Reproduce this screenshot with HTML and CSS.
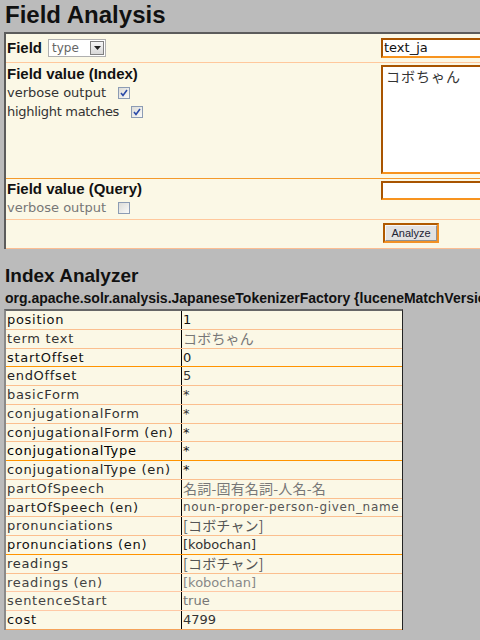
FILE: index.html
```html
<!DOCTYPE html>
<html>
<head>
<meta charset="utf-8">
<link rel="stylesheet" href="styles.css">
</head>
<body>
<h1 class="title">Field Analysis</h1>
<div class="panel">
  <div class="prow r1">
    <div class="lab">
      <span class="blab">Field</span>
      <span class="select"><span class="sel-text">type</span><span class="sel-btn"><svg width="7" height="4" viewBox="0 0 7 4"><path d="M0 0H7L3.5 4Z" fill="#222"/></svg></span></span>
    </div>
    <div class="ctl"><div class="tinput">text_ja</div></div>
  </div>
  <div class="prow r2">
    <div class="lab">
      <div class="blab">Field value (Index)</div>
      <div class="opt">verbose output <span class="cb"><svg width="10" height="10" viewBox="0 0 10 10"><path d="M2 5L4 7.5L8 2" fill="none" stroke="#2a4aa8" stroke-width="1.6"/></svg></span></div>
      <div class="opt hl">highlight matches <span class="cb"><svg width="10" height="10" viewBox="0 0 10 10"><path d="M2 5L4 7.5L8 2" fill="none" stroke="#2a4aa8" stroke-width="1.6"/></svg></span></div>
    </div>
    <div class="ctl"><div class="tarea">コボちゃん</div></div>
  </div>
  <div class="prow r3">
    <div class="lab">
      <div class="blab">Field value (Query)</div>
      <div class="opt dim">verbose output <span class="cb"></span></div>
    </div>
    <div class="ctl"><div class="tinput q"></div></div>
  </div>
  <div class="prow r4">
    <div class="lab"></div>
    <div class="ctl"><span class="btnwrap"><span class="btn">Analyze</span></span></div>
  </div>
</div>
<h2 class="sub">Index Analyzer</h2>
<h3 class="cls">org.apache.solr.analysis.JapaneseTokenizerFactory {luceneMatchVersion=LUCENE_40}</h3>
<div class="tbl">
  <div class="tr b1"><div class="k c1">position</div><div class="v c1">1</div></div>
  <div class="tr b1"><div class="k c3">term text</div><div class="v cj c7">コボちゃん</div></div>
  <div class="tr b2"><div class="k c1">startOffset</div><div class="v c2">0</div></div>
  <div class="tr b1"><div class="k c2">endOffset</div><div class="v c3">5</div></div>
  <div class="tr b1"><div class="k c3">basicForm</div><div class="v c3">*</div></div>
  <div class="tr b1"><div class="k c3">conjugationalForm</div><div class="v c3">*</div></div>
  <div class="tr b1"><div class="k c2">conjugationalForm (en)</div><div class="v c2">*</div></div>
  <div class="tr b2"><div class="k c0">conjugationalType</div><div class="v c1">*</div></div>
  <div class="tr b1"><div class="k c2">conjugationalType (en)</div><div class="v c1">*</div></div>
  <div class="tr b1"><div class="k c3">partOfSpeech</div><div class="v cj c7">名詞-固有名詞-人名-名</div></div>
  <div class="tr b1"><div class="k c2">partOfSpeech (en)</div><div class="v sm c5">noun-proper-person-given_name</div></div>
  <div class="tr b1"><div class="k c3">pronunciations</div><div class="v cj c5">[コボチャン]</div></div>
  <div class="tr b2"><div class="k c1">pronunciations (en)</div><div class="v c3">[kobochan]</div></div>
  <div class="tr b1"><div class="k c3">readings</div><div class="v cj c5">[コボチャン]</div></div>
  <div class="tr b3"><div class="k c4">readings (en)</div><div class="v c8">[kobochan]</div></div>
  <div class="tr b3"><div class="k c4">sentenceStart</div><div class="v c7">true</div></div>
  <div class="tr b4"><div class="k c1">cost</div><div class="v c3">4799</div></div>
</div>
</body>
</html>
```
FILE: styles.css
```css
html, body {
  margin: 0;
  padding: 0;
}
body {
  background: #bbbbbb;
  width: 480px;
  height: 640px;
  overflow: hidden;
  font-family: "DejaVu Sans", "Noto Sans CJK JP", sans-serif;
  color: #222;
}
.title {
  margin: 0;
  padding: 2px 0 0 5px;
  height: 28px;
  font: bold 24px/26px "Liberation Sans", Arial, sans-serif;
  color: #111;
}
.panel {
  margin: 2px 0 0 4px;
  width: 800px;
  border-top: 2px solid #5c5c5c;
  border-left: 2px solid #5c5c5c;
  background: #fbf8e6;
}
.prow {
  display: flex;
  border-bottom: 1px solid #ffc89c;
}
.r1 { height: 28px; }
.r2 { height: 115px; border-bottom-color: #f49a2c; }
.r3 { height: 40px; }
.r4 { height: 28px; border-bottom-color: #fbbd92; }
.lab {
  width: 374px;
  padding-left: 1px;
}
.ctl {
  flex: 1;
}
.blab {
  font: bold 15px/18px "Liberation Sans", Arial, sans-serif;
  color: #111;
}
.r1 .lab {
  display: flex;
  align-items: center;
  gap: 6px;
}
.r2 .blab { margin-top: 2px; }
.r3 .blab { margin-top: 1px; }
.select {
  display: inline-flex;
  align-items: center;
  height: 18px;
  width: 58px;
  box-sizing: border-box;
  background: #fff;
  border: 1px solid #b0b0b0;
  padding: 0 1px 0 3px;
}
.sel-text {
  flex: 1;
  font: 12px "DejaVu Sans", sans-serif;
  color: #666;
}
.sel-btn {
  width: 14px;
  height: 14px;
  box-sizing: border-box;
  border: 1px solid #808080;
  background: linear-gradient(#f6f6f6, #d8d8d8);
  display: flex;
  align-items: center;
  justify-content: center;
}
.tinput {
  margin-top: 4px;
  height: 20px;
  box-sizing: border-box;
  background: #fff;
  border: 2px solid #f7931e;
  border-top-color: #a85400;
  border-left-color: #a85400;
  font: 13px/16px "DejaVu Sans", sans-serif;
  color: #111;
  padding-left: 1px;
}
.tinput.q {
  margin-top: 2px;
  height: 19px;
}
.tarea {
  margin-top: 2px;
  height: 109px;
  box-sizing: border-box;
  background: #fff;
  border: 2px solid #f7931e;
  border-top-color: #a85400;
  border-left-color: #a85400;
  font: 14px/18px "Noto Sans CJK JP", sans-serif;
  color: #333;
  padding: 0 3px;
  letter-spacing: 1px;
}
.opt {
  display: flex;
  align-items: center;
  height: 19px;
  font-size: 13px;
  color: #333;
  white-space: pre;
}
.opt.hl { letter-spacing: -0.3px; }
.r2 .opt:first-of-type { margin-top: 2px; }
.opt.dim { color: #777; }
.cb {
  display: inline-flex;
  align-items: center;
  justify-content: center;
  width: 12px;
  height: 12px;
  box-sizing: border-box;
  margin-left: 8px;
  border: 1px solid #8c9cb4;
  background: linear-gradient(135deg, #dcdcd8, #fafaf8);
}
.btnwrap {
  display: inline-block;
  margin: 3px 0 0 2px;
  border: 2px solid #f29124;
  border-top-color: #b05a00;
  border-left-color: #b05a00;
}
.btn {
  display: block;
  width: 52px;
  height: 16px;
  box-sizing: border-box;
  background: #e2e2e2;
  border: 1px solid #f8f8f8;
  border-right-color: #909090;
  border-bottom-color: #909090;
  font: 11px/14px "Liberation Sans", Arial, sans-serif;
  text-align: center;
  color: #223;
}
.sub {
  margin: 16px 0 0 5px;
  font: bold 19px/22px "Liberation Sans", Arial, sans-serif;
  color: #111;
}
.cls {
  margin: 3px 0 0 5px;
  font: bold 14px/16px "Liberation Sans", Arial, sans-serif;
  color: #111;
  white-space: nowrap;
}
.tbl {
  margin: 3px 0 0 4px;
  width: 399px;
  box-sizing: border-box;
  border-top: 2px solid #666;
  border-left: 2px solid #8a8a8a;
  border-right: 1px solid #222;
  background: #fbf8e6;
}
.tr {
  display: flex;
  height: 18.76px;
  box-sizing: border-box;
  border-bottom: 1px solid #fbbf8f;
}
.tr.b2 { border-bottom-color: #ff9400; }
.tr.b3 { border-bottom-color: #ffc9a6; }
.tr.b4 { border-bottom-color: #f5a35a; }
.k {
  width: 176px;
  box-sizing: border-box;
  border-right: 1px solid #000;
  padding-left: 1px;
  font-size: 13px;
  line-height: 17px;
  letter-spacing: 0.7px;
  white-space: nowrap;
}
.v {
  flex: 1;
  padding-left: 1px;
  font-size: 13px;
  line-height: 17px;
  white-space: nowrap;
}
.v.cj {
  font-family: "Noto Sans CJK JP", sans-serif;
  font-size: 14px;
  line-height: 17px;
  letter-spacing: 0.2px;
}
.v.sm {
  font-size: 12px;
  letter-spacing: 0.7px;
}
.c0 { color: #000; }
.c1 { color: #111; }
.c2 { color: #222; }
.c3 { color: #333; }
.c4 { color: #444; }
.c5 { color: #555; }
.c7 { color: #777; }
.c8 { color: #888; }
```
